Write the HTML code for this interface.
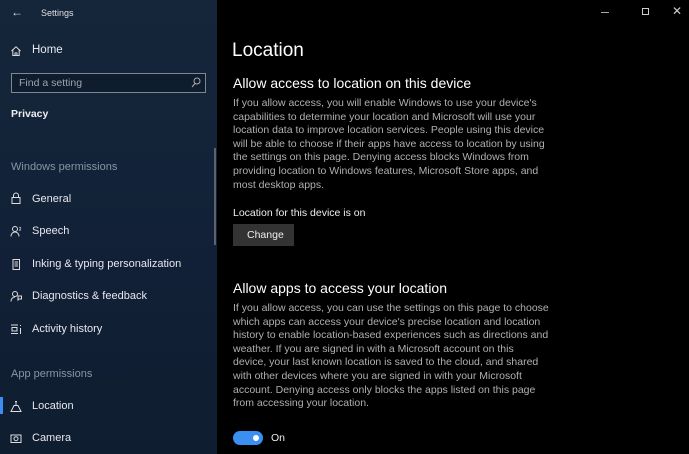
<!DOCTYPE html>
<html><head><style>
*{margin:0;padding:0;box-sizing:border-box}
body{width:689px;height:454px;overflow:hidden;background:#000;font-family:"Liberation Sans",sans-serif;position:relative;color:#fff}
.side{position:absolute;left:0;top:0;width:217px;height:454px;background:linear-gradient(180deg,#15263b 0%,#112036 60%,#0f1d30 100%)}
.t{position:absolute;white-space:nowrap}
.s{font-size:11px;color:#e6e9ee}
.g{font-size:11px;color:#8a95a3}
.ic{position:absolute;left:10px;width:12px;height:12px}
.p{font-size:10.5px;line-height:13.6px;color:#b0b0b0;position:absolute;left:233px;white-space:nowrap}
</style></head><body>
<div class="side">
<div class="t" style="left:11px;top:5px;font-size:12px;color:#ddd">←</div>
<div class="t" style="left:41px;top:8px;font-size:9px;color:#e0e0e0">Settings</div>
<svg class="ic" style="top:45px" viewBox="0 0 12 12"><path d="M1.5 6L6 1.8 10.5 6M2.8 5v5.5h6.4V5M5 10.5V8h2v2.5" fill="none" stroke="#ddd" stroke-width="1"/></svg>
<div class="t s" style="left:32px;top:44px;font-size:11.5px">Home</div>
<div style="position:absolute;left:11px;top:73px;width:195px;height:20px;border:1px solid #7d8896;background:#0f1c2d"></div>
<div class="t" style="left:19px;top:77px;font-size:10.5px;color:#9aa4b0">Find a setting</div>
<svg style="position:absolute;left:191px;top:77px" width="10" height="11" viewBox="0 0 10 11"><circle cx="6" cy="4" r="3" fill="none" stroke="#aaa" stroke-width="1"/><path d="M4 6.5L1 10" stroke="#aaa"/></svg>
<div class="t" style="left:11px;top:108px;font-size:10.5px;font-weight:bold;color:#eee">Privacy</div>
<div style="position:absolute;left:214px;top:148px;width:2px;height:97px;background:#5a6370"></div>
<div class="t g" style="left:11px;top:161px">Windows permissions</div>
<svg class="ic" style="top:192px" viewBox="0 0 12 12"><rect x="2" y="5.5" width="8" height="6" fill="none" stroke="#ddd"/><path d="M3.5 5.5V3.5a2.5 2.5 0 0 1 5 0v2" fill="none" stroke="#ddd"/></svg>
<div class="t s" style="left:32px;top:193px">General</div>
<svg class="ic" style="top:225px" viewBox="0 0 12 12"><circle cx="5" cy="4" r="2.5" fill="none" stroke="#ddd"/><path d="M1 11.5c0-3 2-4.5 4-4.5s4 1.5 4 4.5M9.5 2l1.5 1.5M9 5l2 0" fill="none" stroke="#ddd"/></svg>
<div class="t s" style="left:32px;top:225px">Speech</div>
<svg class="ic" style="top:258px" viewBox="0 0 12 12"><rect x="3" y="1.5" width="6.5" height="10" fill="none" stroke="#ddd"/><path d="M4.5 4h3.5M4.5 6h3.5M4.5 8h3.5" stroke="#ddd"/></svg>
<div class="t s" style="left:32px;top:258px">Inking &amp; typing personalization</div>
<svg class="ic" style="top:290px" viewBox="0 0 12 12"><circle cx="5" cy="4" r="2.5" fill="none" stroke="#ddd"/><path d="M1 11.5c0-3 2-4.5 4-4.5M8 6h3.5v3H9l-1 1z" fill="none" stroke="#ddd"/></svg>
<div class="t s" style="left:32px;top:290px">Diagnostics &amp; feedback</div>
<svg class="ic" style="top:323px" viewBox="0 0 12 12"><path d="M1 2h7M1 10.5h7M2 4.5h5v3.5H2zM10.5 2v1M10.5 5v6" fill="none" stroke="#ddd"/></svg>
<div class="t s" style="left:32px;top:323px">Activity history</div>
<div class="t g" style="left:11px;top:368px">App permissions</div>
<div style="position:absolute;left:0;top:397px;width:3px;height:17px;background:#3b8ff0"></div>
<svg class="ic" style="top:400px" viewBox="0 0 12 12"><path d="M5 1.5h2M6 1.5v4M4 5.5h4l3 6H1z" fill="none" stroke="#ddd"/></svg>
<div class="t s" style="left:32px;top:400px">Location</div>
<svg class="ic" style="top:432px" viewBox="0 0 12 12"><rect x="1" y="3" width="10" height="7.5" fill="none" stroke="#ddd"/><circle cx="6" cy="6.7" r="2" fill="none" stroke="#ddd"/></svg>
<div class="t s" style="left:32px;top:432px">Camera</div>
</div>
<div style="position:absolute;left:601px;top:12px;width:8px;height:1px;background:#aaa"></div>
<div style="position:absolute;left:642px;top:8px;width:7px;height:7px;border:1px solid #ccc"></div>
<div class="t" style="left:672px;top:4px;font-size:12px;color:#ccc">✕</div>
<div class="t" style="left:232px;top:40px;font-size:19px;color:#fff">Location</div>
<div class="t" style="left:233px;top:75px;font-size:14px;color:#fff">Allow access to location on this device</div>
<div class="p" style="top:97px">If you allow access, you will enable Windows to use your device's<br>capabilities to determine your location and Microsoft will use your<br>location data to improve location services. People using this device<br>will be able to choose if their apps have access to location by using<br>the settings on this page. Denying access blocks Windows from<br>providing location to Windows features, Microsoft Store apps, and<br>most desktop apps.</div>
<div class="t" style="left:233px;top:207px;font-size:10.5px;color:#eee">Location for this device is on</div>
<div style="position:absolute;left:233px;top:224px;width:61px;height:22px;background:#333"></div>
<div class="t" style="left:247px;top:229px;font-size:10.5px;color:#eee">Change</div>
<div class="t" style="left:233px;top:280px;font-size:14px;color:#fff">Allow apps to access your location</div>
<div class="p" style="top:302px">If you allow access, you can use the settings on this page to choose<br>which apps can access your device's precise location and location<br>history to enable location-based experiences such as directions and<br>weather. If you are signed in with a Microsoft account on this<br>device, your last known location is saved to the cloud, and shared<br>with other devices where you are signed in with your Microsoft<br>account. Denying access only blocks the apps listed on this page<br>from accessing your location.</div>
<div style="position:absolute;left:233px;top:431px;width:30px;height:14px;border-radius:7px;background:#3b8ff0"></div>
<div style="position:absolute;left:253px;top:435px;width:6px;height:6px;border-radius:3px;background:#fff"></div>
<div class="t" style="left:271px;top:432px;font-size:10.5px;color:#eee">On</div>
</body></html>
